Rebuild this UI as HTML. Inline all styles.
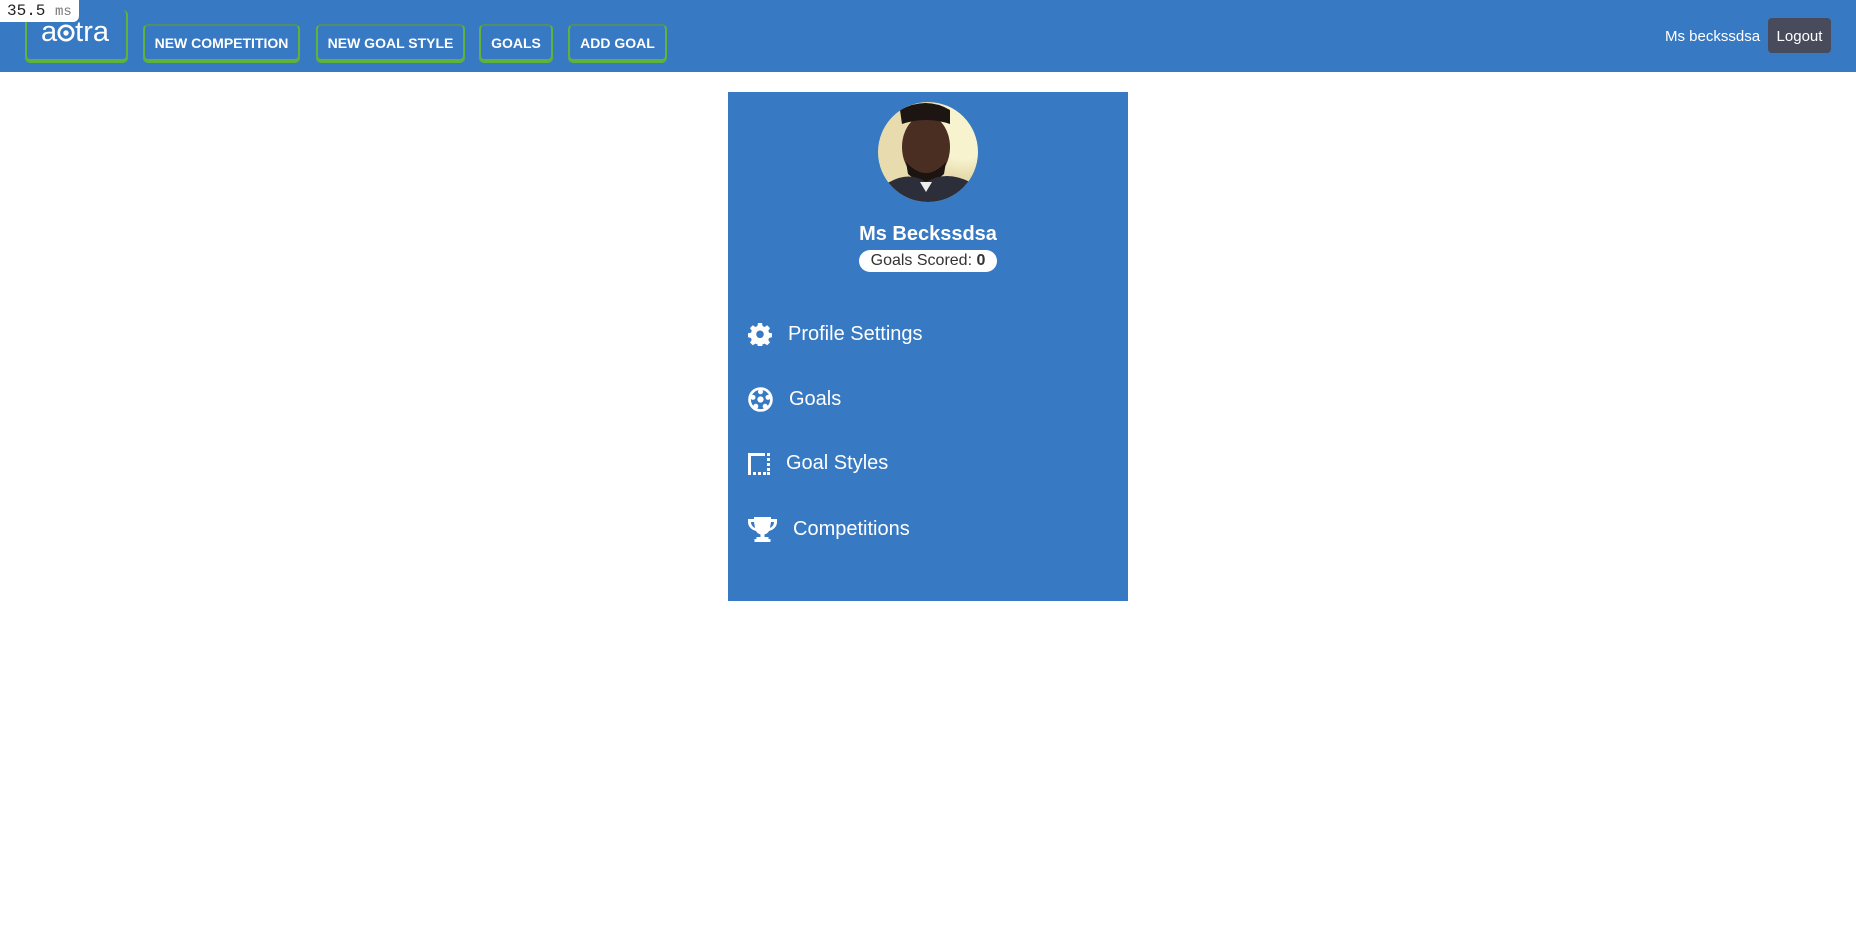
<!DOCTYPE html>
<html><head><meta charset="utf-8"><style>
body{margin:0;width:1856px;height:943px;background:#fff;font-family:"Liberation Sans",sans-serif;position:relative;overflow:hidden}
.nav{position:absolute;left:0;top:0;width:1856px;height:72px;background:#3779c2}
.btn{position:absolute;top:24px;height:37px;border:2px solid #5fb33a;border-top-color:#4f8f6a;border-radius:5px;box-shadow:0 2px 0 #5fb33a;color:#fff;font-weight:bold;font-size:14px;line-height:34px;text-align:center;box-sizing:border-box}
.logo{position:absolute;left:25px;top:10px;width:103px;height:51px;border:2px solid #5fb33a;border-top:none;border-radius:5px;box-shadow:0 2px 0 #5fb33a;box-sizing:border-box}
.logo span{position:absolute;left:14px;top:6px;color:#fff;font-size:29px;letter-spacing:0}
.tag{position:absolute;left:0;top:0;background:#fff;font-family:"Liberation Mono",monospace;font-size:16px;padding:2px 7px;border-radius:0 0 6px 0;color:#222}
.tag i{font-style:normal;color:#777;font-size:14px}
.user{position:absolute;left:1665px;top:28px;color:#fff;font-size:15px}
.logout{position:absolute;left:1768px;top:18px;width:63px;height:35px;background:#474b5c;border-radius:4px;color:#fff;font-size:15px;line-height:37px;text-align:center}
.panel{position:absolute;left:728px;top:92px;width:400px;height:509px;background:#3779c2;color:#fff}
.av{position:absolute;left:150px;top:10px;width:100px;height:100px;border-radius:50%;overflow:hidden;background:radial-gradient(circle at 85% 30%,#f7f3cf 0 25%,transparent 40%),#e8dcae}
.name{position:absolute;left:0;width:400px;top:131px;text-align:center;font-weight:bold;font-size:20px}
.badge{position:absolute;left:131px;top:158px;width:138px;height:22px;background:#fff;border-radius:11px;color:#333;font-size:16px;text-align:center;line-height:22px}
.item{position:absolute;left:20px;font-size:20px;display:flex;align-items:center}
.item svg{margin-right:16px}
</style></head><body>
<div class="nav">
<div class="logo"><span>a<svg width="18" height="18" viewBox="0 0 20 20" style="vertical-align:-1px"><circle cx="10" cy="10" r="8" fill="none" stroke="#fff" stroke-width="3"/><circle cx="10" cy="10" r="3" fill="#fff"/></svg>tra</span></div>
<div class="btn" style="left:143px;width:157px">NEW COMPETITION</div>
<div class="btn" style="left:316px;width:149px">NEW GOAL STYLE</div>
<div class="btn" style="left:479px;width:74px">GOALS</div>
<div class="btn" style="left:568px;width:99px">ADD GOAL</div>
<div class="user">Ms beckssdsa</div>
<div class="logout">Logout</div>
</div>
<div class="tag">35.5 <i>ms</i></div>
<div class="panel">
<div class="av"><svg width="100" height="100" viewBox="0 0 100 100"><ellipse cx="48" cy="45" rx="24" ry="32" fill="#4a2e22"/><path d="M22 8 Q48 -6 72 8 L72 22 Q48 14 24 22Z" fill="#1d1512"/><path d="M28 60 Q48 82 68 60 L66 72 Q48 88 30 72Z" fill="#1b1411"/><path d="M0 100 L8 82 Q30 68 48 80 Q68 68 92 80 L100 100Z" fill="#2c2f3a"/><path d="M42 80 L48 90 L54 80Z" fill="#eee"/></svg></div>
<div class="name">Ms Beckssdsa</div>
<div class="badge">Goals Scored: <b>0</b></div>
<div class="item" style="top:230px"><svg width="24" height="24" viewBox="0 0 24 24"><path fill="#fff" fill-rule="evenodd" d="M10 1h4l.6 3 2 1 2.6-1.7 2.8 2.8L20.3 8.7l.8 2 2.9.6v4l-2.9.6-.8 2 1.7 2.6-2.8 2.8-2.6-1.7-2 .8-.6 2.9h-4l-.6-2.9-2-.8-2.6 1.7-2.800-2.8 1.7-2.6-.8-2L0 15.3v-4l3-.6.8-2L2 6.1l2.8-2.8L7.4 5l2-1zM12 8.5a3.8 3.8 0 100 7.6 3.8 3.8 0 000-7.6z"/></svg>Profile Settings</div>
<div class="item" style="top:295px"><svg width="25" height="25" viewBox="0 0 24 24"><circle cx="12" cy="12" r="10.5" fill="none" stroke="#fff" stroke-width="2.6"/><circle cx="12" cy="12" r="3" fill="#fff"/><circle cx="12" cy="4.5" r="2.4" fill="#fff"/><circle cx="4.8" cy="10" r="2.4" fill="#fff"/><circle cx="19.2" cy="10" r="2.4" fill="#fff"/><circle cx="7.5" cy="18.5" r="2.4" fill="#fff"/><circle cx="16.5" cy="18.5" r="2.4" fill="#fff"/></svg>Goals</div>
<div class="item" style="top:360px"><svg width="22" height="22" viewBox="0 0 22 22" style="margin-right:16px"><path d="M0 0h17v3h-14v19h-3z" fill="#fff"/><g fill="#fff"><rect x="19" y="0" width="3" height="3"/><rect x="19" y="5" width="3" height="3"/><rect x="19" y="10" width="3" height="3"/><rect x="19" y="15" width="3" height="3"/><rect x="19" y="19" width="3" height="3"/><rect x="5" y="19" width="3" height="3"/><rect x="10" y="19" width="3" height="3"/><rect x="15" y="19" width="3" height="3"/></g></svg>Goal Styles</div>
<div class="item" style="top:425px"><svg width="29" height="25" viewBox="0 0 29 25" style="margin-right:16px"><path fill="#fff" d="M6 0h17v2h6v3c0 5-4 8-8 9-1 2-3 3-4.5 3.5V20h4v2h2v3H6.5v-3h2v-2h4v-2.5C11 17 9 16 8 14 4 13 0 10 0 5V2h6zM3 5c0 3 2 5 4 6l-1-6zm23 0h-3l-1 6c2-1 4-3 4-6z"/></svg>Competitions</div>
</div>
</body></html>
